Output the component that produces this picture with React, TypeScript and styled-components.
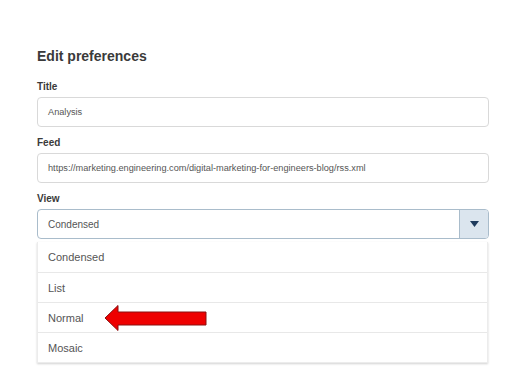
import React from "react";
import styled, { createGlobalStyle } from "styled-components";

const Global = createGlobalStyle`
  body { margin: 0; background: #fff; font-family: "Liberation Sans", Arial, sans-serif; }
`;

const Page = styled.div`
  width: 512px;
  height: 390px;
  box-sizing: border-box;
  padding: 47px 23px 0 37px;
  display: flex;
  flex-direction: column;
`;

const Heading = styled.h2`
  margin: 0 0 16px;
  font-size: 14px;
  line-height: 18px;
  font-weight: bold;
  color: #3a3a3a;
`;

const Label = styled.div`
  font-size: 10px;
  line-height: 12px;
  font-weight: bold;
  color: #3a3a3a;
  margin-bottom: 4px;
`;

const Field = styled.div`
  height: 30px;
  box-sizing: border-box;
  border: 1px solid #d9d9d9;
  border-radius: 4px;
  display: flex;
  align-items: center;
  padding-left: 10px;
  font-size: 9.2px;
  color: #555;
  margin-bottom: 10px;
`;

const Select = styled.div`
  height: 30px;
  box-sizing: border-box;
  border: 1px solid #a9bccb;
  border-radius: 4px;
  display: flex;
  align-items: stretch;
  overflow: hidden;
`;

const SelectValue = styled.div`
  flex: 1;
  display: flex;
  align-items: center;
  padding-left: 10px;
  font-size: 10px;
  color: #555;
`;

const SelectButton = styled.div`
  width: 28px;
  background: #dbe5ee;
  border-left: 1px solid #a9bccb;
  display: flex;
  align-items: center;
  justify-content: center;
`;

const Menu = styled.div`
  margin-top: 3px;
  margin-right: 1px;
  box-shadow: 0 1px 2px rgba(0, 0, 0, 0.18);
  border: 1px solid #ececec;
  border-top: none;
  display: flex;
  flex-direction: column;
`;

const Item = styled.div`
  height: 29px;
  display: flex;
  align-items: center;
  padding-left: 10px;
  font-size: 11px;
  color: #555;
  border-top: 1px solid #e8e8e8;
  &:first-child { border-top: none; height: 30px; }
  position: relative;
`;

const Arrow = styled.svg`
  position: absolute;
  left: 66px;
  top: 1px;
`;

export default function App() {
  return (
    <>
      <Global />
      <Page>
        <Heading>Edit preferences</Heading>
        <Label>Title</Label>
        <Field>Analysis</Field>
        <Label>Feed</Label>
        <Field>https://marketing.engineering.com/digital-marketing-for-engineers-blog/rss.xml</Field>
        <Label>View</Label>
        <Select>
          <SelectValue>Condensed</SelectValue>
          <SelectButton>
            <svg width="9" height="6" viewBox="0 0 9 6">
              <path d="M0 0 H9 L4.5 6 Z" fill="#1d3a5c" />
            </svg>
          </SelectButton>
        </Select>
        <Menu>
          <Item>Condensed</Item>
          <Item>List</Item>
          <Item>
            Normal
            <Arrow width="104" height="28" viewBox="0 0 104 28">
              <path
                d="M1 14 L14 1.5 L14 8 L102 8 L102 21 L14 21 L14 26.5 Z"
                fill="#ee0000"
                stroke="#8a1010"
                strokeWidth="1"
              />
            </Arrow>
          </Item>
          <Item>Mosaic</Item>
        </Menu>
      </Page>
    </>
  );
}
